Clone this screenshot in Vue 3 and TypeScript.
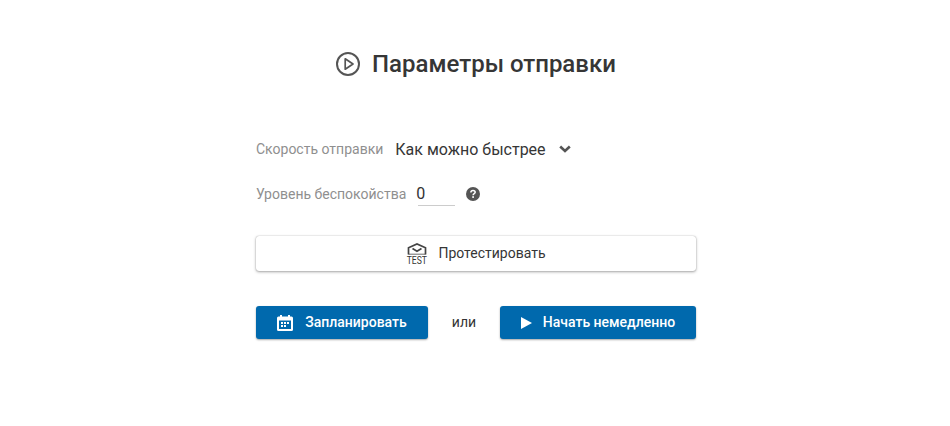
<script setup lang="ts">
const title: string = 'Параметры отправки'
</script>

<template>
  <div class="page">
    <h1 class="title">
      <svg class="title-icon" width="24" height="24" viewBox="0 0 24 24" fill="none" stroke="#555" stroke-width="2">
        <circle cx="12" cy="12" r="11" />
        <path d="M9.2 6.8 L17 12 L9.2 17.2 Z" stroke-width="1.7" stroke-linejoin="round" />
      </svg>
      <span>{{ title }}</span>
    </h1>
    <div class="form">
      <div class="row speed">
        <span class="label">Скорость отправки</span>
        <span class="value">Как можно быстрее</span>
        <svg class="chev" width="12" height="8" viewBox="0 0 12 8" fill="none" stroke="#555" stroke-width="2.6">
          <path d="M1.2 1.5 L6 6 L10.8 1.5" />
        </svg>
      </div>
      <div class="row level">
        <span class="label">Уровень беспокойства</span>
        <span class="input">0</span>
        <svg class="help" width="14" height="14" viewBox="0 0 14 14">
          <circle cx="7" cy="7" r="7" fill="#555" />
          <path d="M4.9 5.4 C4.9 4.2 5.8 3.5 7 3.5 C8.2 3.5 9.2 4.2 9.2 5.3 C9.2 6.7 7.1 6.7 7.1 8.2" fill="none" stroke="#fff" stroke-width="1.5" />
          <rect x="6.25" y="9.2" width="1.7" height="1.7" fill="#fff" />
        </svg>
      </div>
      <button class="btn test" type="button">
        <span class="test-icon">
          <svg width="20" height="12" viewBox="0 0 20 12" fill="none" stroke="#444" stroke-width="1.7">
            <path d="M1.5 11.5 V4.8 L10 1 L18.5 4.8 V11.5" />
            <path d="M5.5 5.5 L10 8.3 L14.5 5.5" />
            <path d="M1.5 11.2 H18.5" stroke-width="0.8" />
          </svg>
          <span class="test-text">TEST</span>
        </span>
        <span class="btn-text">Протестировать</span>
      </button>
      <div class="actions">
        <button class="btn primary plan" type="button">
          <svg width="16" height="16" viewBox="0 0 16 16">
            <path fill="#fff" d="M3 0h2v1.5h6V0h2v1.5h1.5A1.5 1.5 0 0 1 16 3v11.5a1.5 1.5 0 0 1-1.5 1.5h-13A1.5 1.5 0 0 1 0 14.5V3a1.5 1.5 0 0 1 1.5-1.5H3zM2 5.5V14h12V5.5z" />
            <path fill="#fff" d="M4 7h2v2H4zM7 7h2v2H7zM10 7h2v2h-2zM4 10h2v2H4zM7 10h2v2H7z" />
          </svg>
          <span class="btn-text">Запланировать</span>
        </button>
        <span class="or">или</span>
        <button class="btn primary start" type="button">
          <svg width="11" height="12" viewBox="0 0 11 12"><path fill="#fff" d="M0 0 L11 6 L0 12 Z" /></svg>
          <span class="btn-text">Начать немедленно</span>
        </button>
      </div>
    </div>
  </div>
</template>

<style>
html, body { margin: 0; background: #fff; }
</style>

<style scoped>
.page {
  width: 950px;
  height: 426px;
  box-sizing: border-box;
  padding: 49px 0 0 2px;
  font-family: Roboto, "Liberation Sans", sans-serif;
  color: #333;
  display: flex;
  flex-direction: column;
  align-items: center;
  overflow: hidden;
}
.title {
  margin: 0;
  height: 30px;
  display: flex;
  align-items: center;
  gap: 12px;
  font-size: 24px;
  font-weight: 500;
  line-height: 30px;
  color: #363636;
}
.form {
  width: 440px;
  margin-top: 55px;
  display: flex;
  flex-direction: column;
}
.row { display: flex; align-items: center; }
.label { font-size: 14px; color: #8f8f8f; }
.speed { height: 30px; }
.value { margin-left: 12px; font-size: 16px; color: #363636; }
.chev { margin-left: 13px; }
.level { height: 30px; margin-top: 15px; }
.input {
  margin-left: 12px;
  width: 37px;
  height: 24px;
  box-sizing: border-box;
  border-bottom: 1px solid #ccc;
  font-size: 16px;
  line-height: 24px;
  color: #333;
  text-indent: -2px;
}
.help { margin-left: 11px; }
.btn {
  border: 0;
  border-radius: 3px;
  display: flex;
  align-items: center;
  justify-content: center;
  font-family: inherit;
  font-size: 14px;
  padding: 0;
}
.btn-text { margin-bottom: 2px; }
.test {
  margin-top: 27px;
  height: 35px;
  background: #fff;
  color: #363636;
  gap: 11px;
  box-shadow: 0 0 1px rgba(0, 0, 0, 0.35), 0 1px 3px rgba(0, 0, 0, 0.35);
}
.test-icon { display: flex; flex-direction: column; align-items: center; width: 21px; }
.test-text {
  margin-top: 1px;
  font-size: 10px;
  line-height: 9px;
  color: #333;
  transform: scaleX(0.86);
}
.actions {
  margin-top: 35px;
  display: flex;
  align-items: center;
}
.primary {
  height: 33px;
  background: #0069ad;
  color: #fff;
  font-weight: 500;
  box-shadow: 0 1px 2px rgba(0, 0, 0, 0.35);
}
.plan { width: 172px; gap: 12px; }
.start { width: 196px; gap: 11px; }
.or { width: 72px; text-align: center; font-size: 14px; color: #333; margin-bottom: 2px; }
</style>
